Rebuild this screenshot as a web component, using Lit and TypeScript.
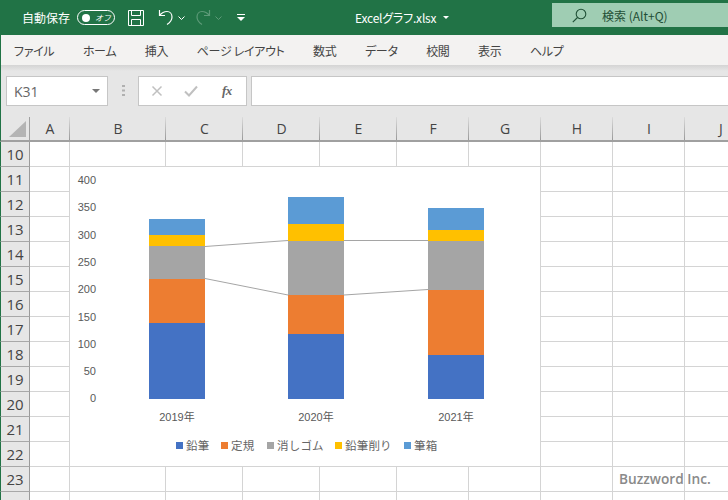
import { LitElement, css, html, svg } from "lit";
import { customElement } from "lit/decorators.js";

const COLS = [
  { name: "A", w: 40 },
  { name: "B", w: 96 },
  { name: "C", w: 77 },
  { name: "D", w: 77 },
  { name: "E", w: 77 },
  { name: "F", w: 72 },
  { name: "G", w: 72 },
  { name: "H", w: 72 },
  { name: "I", w: 72 },
  { name: "J", w: 72 },
];
const ROWS = [10, 11, 12, 13, 14, 15, 16, 17, 18, 19, 20, 21, 22, 23, 24];
const TABS = ["ファイル", "ホーム", "挿入", "ページ レイアウト", "数式", "データ", "校閲", "表示", "ヘルプ"];

const SERIES = [
  { name: "鉛筆", color: "#4472c4" },
  { name: "定規", color: "#ed7d31" },
  { name: "消しゴム", color: "#a5a5a5" },
  { name: "鉛筆削り", color: "#ffc000" },
  { name: "筆箱", color: "#5b9bd5" },
];
// pixel edges of each stack, bottom to top
const BARS = [
  { label: "2019年", x: 149, edges: [399, 323, 279, 246, 235, 219] },
  { label: "2020年", x: 288, edges: [399, 334, 295, 241, 224, 197] },
  { label: "2021年", x: 428, edges: [399, 355, 290, 241, 230, 208] },
];
const BAR_W = 56;
const TICKS = [400, 350, 300, 250, 200, 150, 100, 50, 0];

@customElement("app-root")
export class AppRoot extends LitElement {
  static styles = css`
    :host {
      display: block;
      width: 728px;
      height: 500px;
      overflow: hidden;
      background: #fff;
      font-family: "Noto Sans CJK JP", "Noto Sans", sans-serif;
    }
    .title {
      height: 35px;
      background: #217346;
      color: #fff;
      display: flex;
      align-items: center;
      padding-left: 22px;
      font-size: 12px;
    }
    .toggle {
      width: 38px;
      height: 15px;
      border: 1px solid #fff;
      border-radius: 8px;
      margin-left: 7px;
      display: flex;
      align-items: center;
      padding-left: 4px;
      gap: 5px;
      font-size: 8px;
      font-style: italic;
      box-sizing: border-box;
    }
    .knob {
      width: 8px;
      height: 8px;
      border-radius: 50%;
      background: #fff;
    }
    .title svg {
      display: block;
      flex: none;
    }
    .save {
      margin-left: 13px;
    }
    .undo {
      margin-left: 14px;
    }
    .caret {
      margin-left: 4px;
    }
    .redo {
      margin-left: 10px;
    }
    .more {
      margin-left: 15px;
    }
    .file {
      margin-left: 110px;
      width: 82px;
      white-space: nowrap;
      letter-spacing: -0.2px;
      font-feature-settings: "palt";
    }
    .file-caret {
      margin-left: 6px;
    }
    .search {
      margin-left: auto;
      width: 176px;
      height: 24px;
      margin-top: -5px;
      background: #9fcdb3;
      color: #1f4f36;
      display: flex;
      align-items: center;
      padding-left: 20px;
      gap: 15px;
      box-sizing: border-box;
    }
    .tabs {
      height: 30px;
      background: #f3f2f1;
      border-left: 1px solid #217346;
      display: flex;
      align-items: center;
      padding-left: 13px;
      gap: 28.5px;
      font-size: 12px;
      letter-spacing: -0.3px;
      color: #444;
      white-space: nowrap;
      font-feature-settings: "palt";
    }
    .formula {
      height: 52px;
      background: linear-gradient(#d4d4d4, #e6e6e6 6px);
      border-left: 1px solid #217346;
      display: flex;
      align-items: flex-start;
      padding: 11px 0 0 5px;
      box-sizing: border-box;
    }
    .box {
      height: 30px;
      background: #fff;
      border: 1px solid #c6c6c6;
      box-sizing: border-box;
      display: flex;
      align-items: center;
    }
    .name {
      width: 102px;
      justify-content: space-between;
      padding: 0 7px;
      font-size: 14px;
      color: #666;
      font-family: "Open Sans", sans-serif;
    }
    .dots {
      width: 30px;
      display: flex;
      justify-content: center;
      padding-top: 9px;
    }
    .fn {
      width: 109px;
      padding-left: 12px;
      gap: 21px;
    }
    .fx {
      font-family: "Liberation Serif", serif;
      font-style: italic;
      font-weight: bold;
      font-size: 13px;
      color: #666;
      margin-left: 3px;
      letter-spacing: -0.5px;
    }
    .input {
      margin-left: 4px;
      flex: 1;
      border-right: none;
    }
    .sheet {
      position: relative;
      display: grid;
      grid-template-columns: 30px 40px 96px 77px 77px 77px 72px 72px 72px 72px 72px;
      grid-auto-rows: 25px;
      font-family: "Open Sans", sans-serif;
      font-size: 14px;
      color: #444;
    }
    .corner,
    .colh,
    .rowh {
      box-sizing: border-box;
    }
    .corner {
      background: #e6e6e6;
      border-left: 1px solid #217346;
      border-right: 1px solid #a0a0a0;
      border-bottom: 2px solid #a0a0a0;
      padding: 4px 0 0 8px;
    }
    .colh {
      background: linear-gradient(#dcdcdc, #999) right / 1px 100% no-repeat, #e6e6e6;
      display: flex;
      align-items: center;
      justify-content: center;
      border-bottom: 2px solid #a0a0a0;
    }
    .rowh {
      background: #e6e6e6;
      display: flex;
      align-items: center;
      justify-content: center;
      font-size: 15px;
      border-left: 1px solid #217346;
      border-right: 1px solid #9a9a9a;
      border-bottom: 1px solid #a8a8a8;
    }
    .cell {
      box-sizing: border-box;
      border-right: 1px solid #d4d4d4;
      border-bottom: 1px solid #d4d4d4;
    }
    .chart {
      position: absolute;
      left: 70px;
      top: 50px;
      width: 470px;
      height: 299px;
      background: #fff;
      display: block;
      font-family: "Liberation Sans", "Noto Sans CJK JP", sans-serif;
    }
    .chart text {
      font-size: 11px;
      fill: #595959;
    }
    .chart .jp {
      font-family: "Noto Sans CJK JP", sans-serif;
      font-size: 11.5px;
      fill: #666;
      letter-spacing: 0.2px;
    }
    .mark {
      position: absolute;
      left: 619px;
      top: 352px;
      font-family: "Open Sans", sans-serif;
      font-weight: 600;
      font-size: 13.7px;
      color: #8a8a8a;
      white-space: nowrap;
    }
  `;

  private renderChart() {
    const legendX = [176, 221, 267, 335, 404];
    return svg`
      <svg class="chart" viewBox="70 167 470 299">
        ${TICKS.map(
          (t, i) => svg`<text x="96" y=${184 + i * 27.3} text-anchor="end">${t}</text>`
        )}
        <g stroke="#a5a5a5" stroke-width="1" fill="none">
          <path d="M205 246.5L288 240.5M344 240.5L428 240.5" />
          <path d="M205 278.5L288 295M344 295L428 289.5" />
        </g>
        ${BARS.map(
          (b) => svg`
            ${SERIES.map((s, i) => svg`
              <rect x=${b.x} y=${b.edges[i + 1]} width=${BAR_W}
                height=${b.edges[i] - b.edges[i + 1]} fill=${s.color} />
            `)}
            <text x=${b.x + BAR_W / 2} y="421" text-anchor="middle">${b.label}</text>
          `
        )}
        ${SERIES.map(
          (s, i) => svg`
            <rect x=${legendX[i]} y="442" width="7" height="7" fill=${s.color} />
            <text class="jp" x=${legendX[i] + 10} y="450">${s.name}</text>
          `
        )}
      </svg>
    `;
  }

  render() {
    return html`
      <div class="title">
        <span>自動保存</span>
        <div class="toggle"><span class="knob"></span><span>オフ</span></div>
        <svg class="save" width="16" height="16" viewBox="0 0 16 16" fill="none" stroke="#fff">
          <path d="M.5.5h15v15H.5zM3.5.5v5h9v-5M3.5 15.5v-6h9v6" />
        </svg>
        <svg class="undo" width="16" height="17" viewBox="0 0 16 17" fill="none" stroke="#fff" stroke-width="1.2">
          <path d="M1.5 1v5.5H7M1.5 6.5C4 3.5 6 2.5 9 2.5c3 0 5 2.3 5 5.5 0 3-2 5.5-5 7.5" />
        </svg>
        <svg class="caret" width="7" height="4" viewBox="0 0 7 4" fill="none" stroke="#fff">
          <path d="M.5.5L3.5 3.5 6.5.5" />
        </svg>
        <svg class="redo" width="16" height="17" viewBox="0 0 16 17" fill="none" stroke="#5d9a78" stroke-width="1.2">
          <path d="M14.5 1v5.5H9M14.5 6.5C12 3.5 10 2.5 7 2.5c-3 0-5 2.3-5 5.5 0 3 2 5.5 5 7.5" />
        </svg>
        <svg class="caret" width="7" height="4" viewBox="0 0 7 4" fill="none" stroke="#5d9a78">
          <path d="M.5.5L3.5 3.5 6.5.5" />
        </svg>
        <svg class="more" width="8" height="7" viewBox="0 0 8 7" fill="#fff">
          <path d="M0 0h8v1H0zM0 3h8L4 7z" />
        </svg>
        <span class="file">Excelグラフ.xlsx</span>
        <svg class="file-caret" width="6" height="3" viewBox="0 0 6 3" fill="#fff">
          <path d="M0 0h6L3 3z" />
        </svg>
        <div class="search">
          <svg width="15" height="15" viewBox="0 0 15 15" fill="none" stroke="#1f4f36" stroke-width="1.1">
            <circle cx="9" cy="6" r="4.8" />
            <path d="M5.5 9.5L.8 14.2" />
          </svg>
          <span>検索 (Alt+Q)</span>
        </div>
      </div>
      <div class="tabs">${TABS.map((t) => html`<span>${t}</span>`)}</div>
      <div class="formula">
        <div class="box name">
          <span>K31</span>
          <svg width="8" height="4" viewBox="0 0 8 4" fill="#777"><path d="M0 0h8L4 4z" /></svg>
        </div>
        <div class="dots">
          <svg width="3" height="11" viewBox="0 0 3 11" fill="#b0b0b0">
            <path d="M0 0h3v2H0zM0 4.5h3v2H0zM0 9h3v2H0z" />
          </svg>
        </div>
        <div class="box fn">
          <svg width="12" height="12" viewBox="0 0 12 12" fill="none" stroke="#c0c0c0" stroke-width="1.5">
            <path d="M1.5 1.5l9 9M10.5 1.5l-9 9" />
          </svg>
          <svg width="14" height="12" viewBox="0 0 14 12" fill="none" stroke="#c0c0c0" stroke-width="2">
            <path d="M1 6.5l4 4L13 1.5" />
          </svg>
          <span class="fx">fx</span>
        </div>
        <div class="box input"></div>
      </div>
      <div class="sheet">
        <div class="corner">
          <svg width="17" height="16" viewBox="0 0 17 16" fill="#b4b4b4" style="display:block">
            <path d="M17 0v16H0z" />
          </svg>
        </div>
        ${COLS.map((c) => html`<div class="colh">${c.name}</div>`)}
        ${ROWS.map(
          (r) => html`
            <div class="rowh">${r}</div>
            ${COLS.map(() => html`<div class="cell"></div>`)}
          `
        )}
        ${this.renderChart()}
        <div class="mark">Buzzword Inc.</div>
      </div>
    `;
  }
}
